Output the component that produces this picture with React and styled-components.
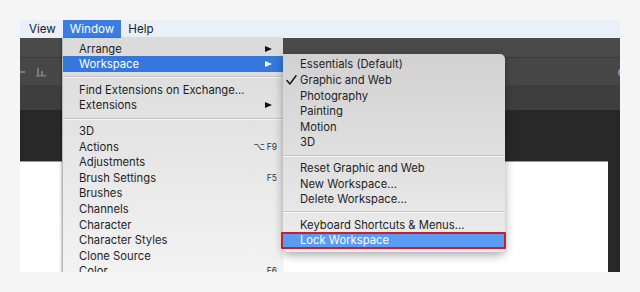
import React from "react";
import styled, { createGlobalStyle } from "styled-components";

const Global = createGlobalStyle`
  html, body { margin: 0; padding: 0; background: #f5f5f5; }
  body { font-family: Inter, "Liberation Sans", sans-serif; }
`;

const Page = styled.div`
  width: 640px;
  height: 292px;
  padding: 20px;
  box-sizing: border-box;
`;

const Frame = styled.div`
  position: relative;
  width: 600px;
  height: 252px;
  overflow: hidden;
  display: flex;
  flex-direction: column;
`;

const MenuBar = styled.div`
  height: 18px;
  flex: none;
  display: flex;
  align-items: stretch;
  padding-left: 2px;
  background: #e9f0f9;
`;

const MenuTitle = styled.div`
  display: flex;
  align-items: center;
  padding: 0 7px;
  font-size: 11.6px;
  color: ${(p) => (p.$active ? "#fff" : "#222")};
  background: ${(p) => (p.$active ? "#3a7ce0" : "transparent")};
`;

const AppBody = styled.div`
  flex: 1;
  display: flex;
  flex-direction: column;
  background: #282828;
`;

const AppBar = styled.div`
  height: 19px;
  flex: none;
  background: #4a4a4a;
  border-bottom: 1px solid #393939;
`;

const OptionsBar = styled.div`
  height: 27px;
  flex: none;
  display: flex;
  align-items: center;
  justify-content: space-between;
  background: #474747;
  color: #8a8a8a;
`;

const ToolIcons = styled.div`
  display: flex;
  align-items: center;
  gap: 10px;
`;

const EdgeGlyph = styled.span`
  font-size: 11px;
  color: #bdbdbd;
  margin-right: -4px;
`;

const TabBar = styled.div`
  height: 25px;
  flex: none;
  background: #3e3e3e;
`;

const Canvas = styled.div`
  flex: 1;
  display: flex;
  flex-direction: column;
  padding: 51px 12px 0 0;
`;

const Document = styled.div`
  flex: 1;
  background: #fff;
  border-top: 1px solid #9a9a9a;
`;

const Dropdown = styled.div`
  position: absolute;
  left: 42px;
  top: 18px;
  width: 221px;
  height: 240px;
  box-sizing: border-box;
  padding-top: 2.8px;
  background: linear-gradient(#dadada, #f3f3f3);
  border-left: 1px solid #b8b8b8;
  box-shadow: -1px 0 2px rgba(0, 0, 0, 0.25);
`;

const Submenu = styled.div`
  position: absolute;
  left: 263px;
  top: 34px;
  width: 222px;
  box-sizing: border-box;
  padding: 2.6px 0 3.6px;
  border-radius: 0 5px 5px 5px;
  background: linear-gradient(#d1d1d1, #ededed);
  box-shadow: 0 3px 10px rgba(0, 0, 0, 0.35);
`;

const Item = styled.div`
  height: 15.6px;
  display: flex;
  align-items: center;
  box-sizing: border-box;
  padding: 0 11px 0 ${(p) => (p.$gutter ? "0" : "16px")};
  font-size: 11.25px;
  color: ${(p) => (p.$selected ? "#fff" : "#1e1e1e")};
  background: ${(p) => (p.$selected ? "#3478dc" : "transparent")};
  white-space: nowrap;
`;

const FramedItem = styled(Item)`
  height: 17px;
  margin: -0.7px -1px 0 -2px;
  padding-left: 17px;
  color: #fff;
  background: #5a9cf4;
  border: 2px solid #c81f2c;
  border-radius: 1px;
`;

const Label = styled.span`
  flex: 1;
`;

const CheckSlot = styled.span`
  width: 17px;
  flex: none;
  display: flex;
  align-items: center;
  padding-left: 3px;
  box-sizing: border-box;
`;

const Arrow = styled.span`
  width: 0;
  height: 0;
  border-top: 3.5px solid transparent;
  border-bottom: 3.5px solid transparent;
  border-left: 7px solid ${(p) => (p.$light ? "#fff" : "#111")};
`;

const Shortcut = styled.span`
  display: flex;
  align-items: center;
  gap: 2px;
  font-size: 8.5px;
  color: #333;
  margin-right: -5px;
`;

const OptKey = styled.span`
  font-family: "DejaVu Sans", sans-serif;
  font-size: 10px;
`;

const Separator = styled.div`
  height: 10px;
  display: flex;
  align-items: center;
  &::after {
    content: "";
    flex: 1;
    height: 1px;
    background: #c6c6c6;
    box-shadow: 0 1px 0 rgba(255, 255, 255, 0.6);
  }
`;

const windowItems = [
  { label: "Arrange", arrow: true },
  { label: "Workspace", arrow: true, selected: true },
  { sep: true },
  { label: "Find Extensions on Exchange..." },
  { label: "Extensions", arrow: true },
  { sep: true },
  { label: "3D" },
  { label: "Actions", shortcut: "F9", opt: true },
  { label: "Adjustments" },
  { label: "Brush Settings", shortcut: "F5" },
  { label: "Brushes" },
  { label: "Channels" },
  { label: "Character" },
  { label: "Character Styles" },
  { label: "Clone Source" },
  { label: "Color", shortcut: "F6" },
];

const workspaceItems = [
  { label: "Essentials (Default)" },
  { label: "Graphic and Web", checked: true },
  { label: "Photography" },
  { label: "Painting" },
  { label: "Motion" },
  { label: "3D" },
  { sep: true },
  { label: "Reset Graphic and Web" },
  { label: "New Workspace..." },
  { label: "Delete Workspace..." },
  { sep: true },
  { label: "Keyboard Shortcuts & Menus..." },
  { label: "Lock Workspace", framed: true },
];

function CheckMark() {
  return (
    <svg width="11" height="10" viewBox="0 0 11 10">
      <path
        d="M1 5.6 L3.9 9 L10 0.8"
        fill="none"
        stroke="#1a1a1a"
        strokeWidth="1.5"
        strokeLinecap="round"
        strokeLinejoin="round"
      />
    </svg>
  );
}

function ToolGlyphs() {
  return (
    <ToolIcons>
      <svg width="6" height="10" viewBox="0 0 6 10">
        <rect x="0" y="4" width="5" height="2" fill="#7c7c7c" />
      </svg>
      <svg width="10" height="10" viewBox="0 0 10 10">
        <rect x="1" y="1" width="2" height="8" fill="#7c7c7c" />
        <rect x="5" y="4" width="2" height="5" fill="#7c7c7c" />
        <rect x="0" y="8" width="10" height="1.5" fill="#7c7c7c" />
      </svg>
    </ToolIcons>
  );
}

export default function App() {
  return (
    <Page>
      <Global />
      <Frame>
        <MenuBar>
          <MenuTitle>View</MenuTitle>
          <MenuTitle $active>Window</MenuTitle>
          <MenuTitle>Help</MenuTitle>
        </MenuBar>
        <AppBody>
          <AppBar />
          <OptionsBar>
            <ToolGlyphs />
            <EdgeGlyph>c</EdgeGlyph>
          </OptionsBar>
          <TabBar />
          <Canvas>
            <Document />
          </Canvas>
        </AppBody>

        <Dropdown>
          {windowItems.map((it, i) =>
            it.sep ? (
              <Separator key={i} />
            ) : (
              <Item key={i} $selected={it.selected}>
                <Label>{it.label}</Label>
                {it.arrow && <Arrow $light={it.selected} />}
                {it.shortcut && (
                  <Shortcut>
                    {it.opt && <OptKey>⌥</OptKey>}
                    {it.shortcut}
                  </Shortcut>
                )}
              </Item>
            )
          )}
        </Dropdown>

        <Submenu>
          {workspaceItems.map((it, i) =>
            it.sep ? (
              <Separator key={i} />
            ) : it.framed ? (
              <FramedItem key={i}>
                <Label>{it.label}</Label>
              </FramedItem>
            ) : (
              <Item key={i} $gutter>
                <CheckSlot>{it.checked && <CheckMark />}</CheckSlot>
                <Label>{it.label}</Label>
              </Item>
            )
          )}
        </Submenu>
      </Frame>
    </Page>
  );
}
